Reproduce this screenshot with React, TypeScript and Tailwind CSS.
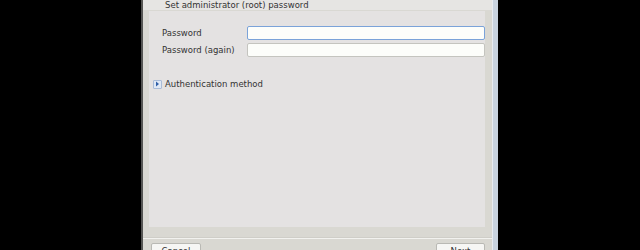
export default function App() {
  return (
    <div
      className="w-[640px] h-[250px] bg-black flex overflow-hidden text-[8.5px] text-[#333333]"
      style={{ fontFamily: '"DejaVu Sans", sans-serif' }}
    >
      <div className="ml-[141px] w-[2px] h-full bg-[#555553] shrink-0" />
      <div className="w-[349px] h-full bg-[#d9d8d2] flex flex-col shrink-0">
        {/* Header */}
        <div className="h-[11px] shrink-0 bg-[#e6e5e3] border-b border-[#d9d8d3] pl-[22px] pt-[1px] leading-[9px]">
          Set administrator (root) password
        </div>
        {/* Panel */}
        <div className="ml-[6px] w-[336px] h-[216px] shrink-0 bg-[#e4e2e2] flex flex-col pt-[15px]">
          <div className="flex flex-col gap-[3px]">
            <div className="flex items-center h-[14px]">
              <div className="w-[98px] pl-[13px]">Password</div>
              <div className="w-[238px] h-[14px] bg-[#fdfefb] border border-[#7ba3d9] rounded-[2px]" />
            </div>
            <div className="flex items-center h-[14px]">
              <div className="w-[98px] pl-[13px]">Password (again)</div>
              <div className="w-[238px] h-[14px] bg-[#fcfdfa] border border-[#c4c4bf] rounded-[2px]" />
            </div>
          </div>
          <div className="flex items-center mt-[21px] pl-[4px] gap-[3px] h-[12px]">
            <div className="w-[9px] h-[9px] bg-[#dfe8f5] border border-[#a9bcd8] rounded-[1px] flex items-center justify-center">
              <svg width="5" height="6" viewBox="0 0 5 6">
                <path d="M1 0.5 L4 3 L1 5.5 Z" fill="#2f5fa8" />
              </svg>
            </div>
            <span>Authentication method</span>
          </div>
        </div>
        {/* Bottom */}
        <div className="mt-[10px] h-[2px] shrink-0 bg-[#f2f2ef] border-t border-[#cfcec8]" />
        <div className="flex justify-between px-[8px] mt-[4px] shrink-0">
          <div className="w-[50px] h-[16px] bg-[#f6f6f4] border border-[#b9b9b4] rounded-[2px] flex justify-center pt-[1px]">
            Cancel
          </div>
          <div className="w-[49px] h-[16px] bg-[#f6f6f4] border border-[#b9b9b4] rounded-[2px] flex justify-center pt-[1px] mr-[-1px]">
            Next
          </div>
        </div>
      </div>
      <div className="w-[6px] h-full shrink-0 bg-[#c9d3df] border-l border-[#e8ecf1]" />
    </div>
  )
}
